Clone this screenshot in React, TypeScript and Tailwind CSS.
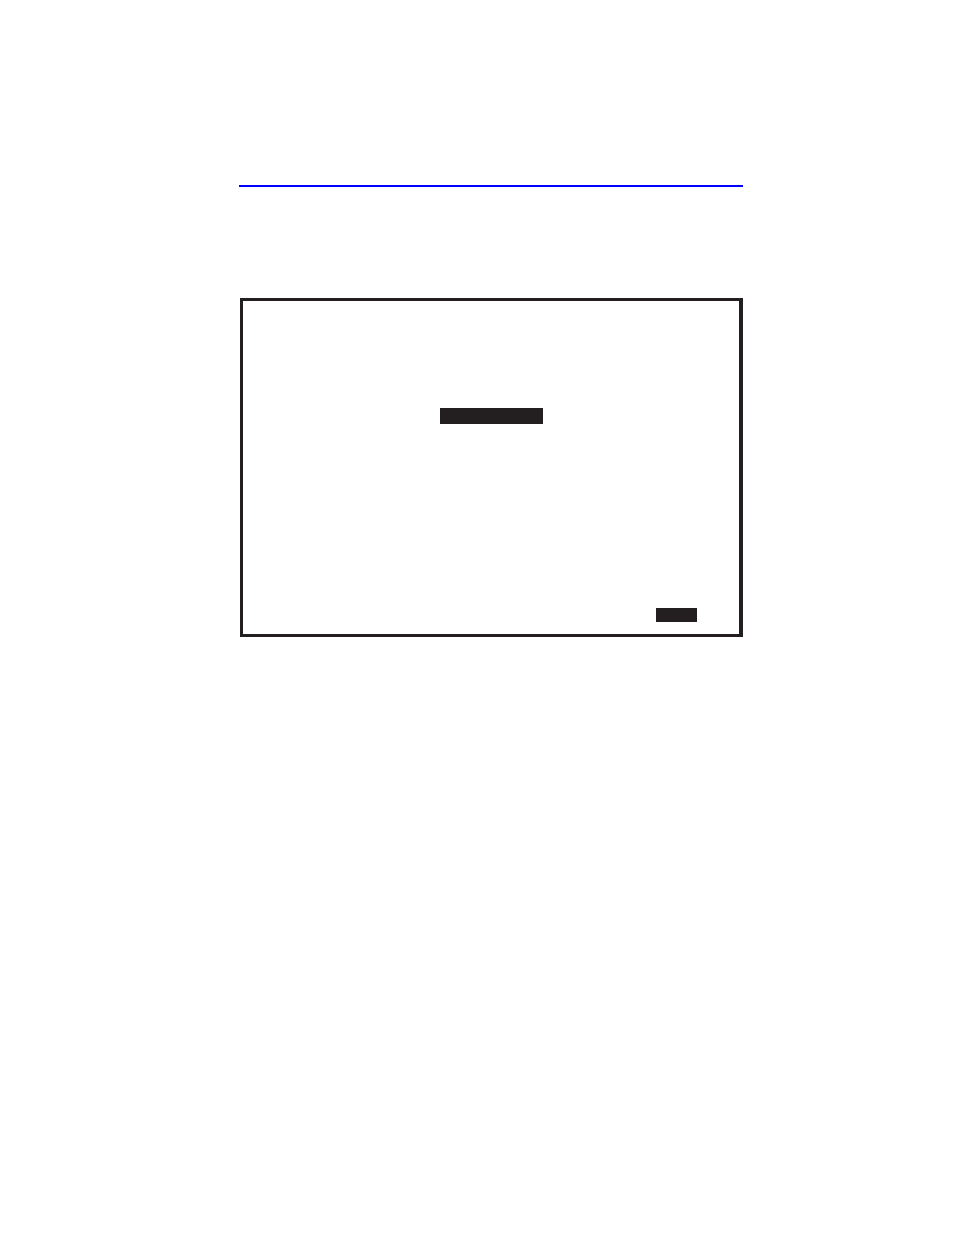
const BARS = [
  { id: 'title', className: 'h-4 w-[103px] self-center' },
  { id: 'action', className: 'mt-46 mr-[42px] h-3.5 w-[41px] self-end' },
];

function Screen() {
  return (
    <section className="ml-px flex flex-col border-[3px] border-r-4 border-[#231f20] pt-[107px] pb-3">
      {BARS.map(({ id, className }) => (
        <div key={id} className={`bg-[#231f20] ${className}`} />
      ))}
    </section>
  );
}

export default function App() {
  return (
    <main className="min-h-screen bg-white pt-[185px] pr-[211px] pl-[239px]">
      <hr className="mb-[111px] border-t-2 border-[#0000ff]" />
      <Screen />
    </main>
  );
}
